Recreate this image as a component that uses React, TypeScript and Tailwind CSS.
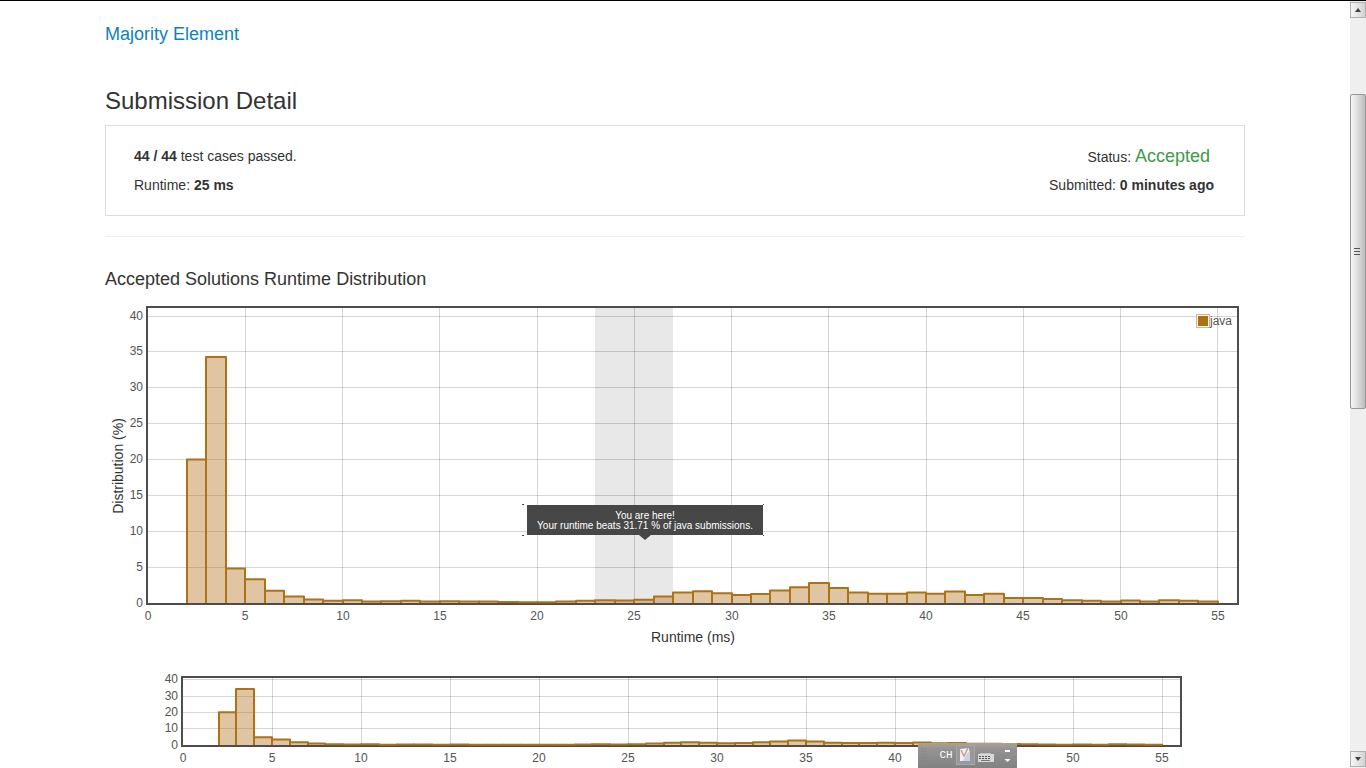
import React from "react";

type Frame = {
  width: number;
  height: number;
  left: number;
  top: number;
  right: number;
  bottom: number;
  unitX: number;
  unitY: number;
  stepY: number;
  labelY: number;
};

const FIRST_BIN = 2;

const SHARES: number[] = [
  20, 34.3, 4.8, 3.3, 1.7, 0.9, 0.5, 0.3, 0.4, 0.2, 0.25, 0.3, 0.2, 0.25, 0.2, 0.2, 0.15, 0.1, 0.1,
  0.2, 0.3, 0.4, 0.35, 0.45, 0.9, 1.45, 1.65, 1.35, 1.1, 1.25, 1.75, 2.2, 2.8, 2.1, 1.45, 1.3, 1.3,
  1.45, 1.3, 1.6, 1.1, 1.3, 0.7, 0.7, 0.55, 0.4, 0.3, 0.2, 0.35, 0.2, 0.4, 0.3, 0.2,
];

const MAIN: Frame = {
  width: 1140,
  height: 352,
  left: 43,
  top: 8,
  right: 1132,
  bottom: 303,
  unitX: 19.45,
  unitY: 7.175,
  stepY: 5,
  labelY: 320,
};

const OVERVIEW: Frame = {
  width: 1140,
  height: 116,
  left: 78,
  top: 26,
  right: 1075,
  bottom: 93,
  unitX: 17.8,
  unitY: 1.633,
  stepY: 10,
  labelY: 110,
};

function Plot({ frame, children }: { frame: Frame; children?: React.ReactNode }) {
  const { left, top, right, bottom, unitX, unitY, stepY, labelY } = frame;
  const xTicks = Array.from({ length: 12 }, (_, i) => i * 5);
  const yTicks = Array.from({ length: 40 / stepY + 1 }, (_, i) => i * stepY);
  const px = (v: number) => Math.round(left + v * unitX);
  const gridX = (v: number) => Math.floor(left + v * unitX) + 0.5;
  const py = (v: number) => Math.floor(bottom - v * unitY);

  return (
    <>
      <g stroke="#000000" strokeOpacity="0.16">
        {xTicks.slice(1).map((t) => (
          <line key={t} x1={gridX(t)} x2={gridX(t)} y1={top} y2={bottom} />
        ))}
        {yTicks.slice(1).map((t) => (
          <line key={t} x1={left} x2={right} y1={py(t) + 0.5} y2={py(t) + 0.5} />
        ))}
      </g>
      {children}
      <rect
        x={left - 1}
        y={top - 1}
        width={right - left + 2}
        height={bottom - top + 2}
        fill="none"
        stroke="#4d4d4f"
        strokeWidth="2"
      />
      <g fill="#b06f13" fillOpacity="0.4" stroke="#ae7216" strokeWidth="2" strokeLinejoin="round">
        {SHARES.map((share, i) => {
          const x0 = px(FIRST_BIN + i);
          const x1 = px(FIRST_BIN + i + 1);
          return <path key={i} d={`M${x0} ${bottom}V${bottom - share * unitY}H${x1}V${bottom}`} />;
        })}
      </g>
      <g fill="#545454" className="text-[12px]">
        {xTicks.map((t) => (
          <text key={t} x={px(t)} y={labelY} textAnchor="middle">
            {t}
          </text>
        ))}
        {yTicks.map((t) => (
          <text key={t} x={left - 5} y={py(t) + 4} textAnchor="end">
            {t}
          </text>
        ))}
      </g>
    </>
  );
}

function RuntimeChart() {
  return (
    <svg
      viewBox={`0 0 ${MAIN.width} ${MAIN.height}`}
      className="block w-full"
      role="img"
      aria-label="Accepted Solutions Runtime Distribution"
    >
      <Plot frame={MAIN}>
        <rect x="490" y="8" width="78" height="295" fill="#000000" fillOpacity="0.09" />
      </Plot>
      <g fill="#333333" className="text-[14px]">
        <text x="588" y="342" textAnchor="middle">
          Runtime (ms)
        </text>
        <text transform="translate(18 166) rotate(-90)" textAnchor="middle">
          Distribution (%)
        </text>
      </g>
      <rect x="1091.5" y="14.5" width="13" height="13" fill="#ffffff" stroke="#d9b48f" />
      <rect x="1093" y="16" width="10" height="10" fill="#b06f13" />
      <text x="1105" y="25" fill="#545454" className="text-[12px]">
        java
      </text>
      <g fill="#474747">
        <rect x="422" y="205" width="236" height="30" />
        <path d="M534 235h12l-6 5z" />
        <rect x="417" y="204" width="2" height="1" />
        <rect x="417" y="235" width="2" height="1" />
        <rect x="658" y="204" width="1" height="1" />
        <rect x="658" y="235" width="1" height="1" />
      </g>
      <g fill="#ffffff" textAnchor="middle" className="text-[10px]">
        <text x="540" y="219">
          You are here!
        </text>
        <text x="540" y="229">
          Your runtime beats 31.71 % of java submissions.
        </text>
      </g>
    </svg>
  );
}

function OverviewChart() {
  return (
    <svg
      viewBox={`0 0 ${OVERVIEW.width} ${OVERVIEW.height}`}
      className="block w-full"
      role="img"
      aria-label="Runtime overview"
    >
      <Plot frame={OVERVIEW} />
    </svg>
  );
}

function ScrollButton({ label, path }: { label: string; path: string }) {
  return (
    <button
      type="button"
      aria-label={label}
      className="flex h-4 w-full items-center justify-center border border-[#b0b0b0] bg-linear-to-r from-[#f6f6f6] to-[#d2d2d2]"
    >
      <svg width="6" height="4" viewBox="0 0 6 4">
        <path d={path} fill="#404040" />
      </svg>
    </button>
  );
}

function ScrollBar() {
  return (
    <aside className="flex w-4 shrink-0 flex-col bg-[#efefef] py-px">
      <ScrollButton label="Scroll up" path="M0 4L3 0L6 4z" />
      <div className="h-19" />
      <div className="flex h-[315px] items-center rounded-xs border border-[#979797] bg-linear-to-r from-[#f5f5f5] via-[#dcdcdc] to-[#bcbcbc] pl-[3px]">
        <svg width="6" height="8" viewBox="0 0 6 8">
          <path d="M0 0.500h6M0 3.500h6M0 6.500h6" stroke="#555555" />
        </svg>
      </div>
      <div className="flex-1" />
      <ScrollButton label="Scroll down" path="M0 0L3 4L6 0z" />
    </aside>
  );
}

function LanguageBar() {
  return (
    <div className="absolute right-[349px] bottom-0 flex h-[25px] w-[99px] items-center bg-linear-to-b from-[#aaa195] via-[#939393] via-25% to-[#828282]">
      <svg width="20" height="25" viewBox="0 0 20 25" className="shrink-0">
        <path d="M4 5v14M7 5v14" stroke="#74828a" strokeDasharray="1 2" />
      </svg>
      <button type="button" className="w-4 font-['Liberation_Mono',monospace] text-[11px] text-white">
        CH
      </button>
      <button type="button" aria-label="Input method" className="ml-0.5 shrink-0">
        <svg width="19" height="25" viewBox="0 0 19 25">
          <rect x="0.500" y="2.500" width="18" height="19" fill="#999999" stroke="#aaa5a2" />
          <path d="M4 6l9-1v13H4z" fill="#eef2f8" />
          <path d="M10 12l4-5v11h-7z" fill="#c1d7ee" />
          <path d="M5 7l3 6 4-8" fill="none" stroke="#d99a80" strokeWidth="1.500" />
        </svg>
      </button>
      <button type="button" aria-label="Keyboard" className="ml-0.5 shrink-0">
        <svg width="18" height="25" viewBox="0 0 18 25">
          <path d="M1 11h16v8H1z" fill="#d9d9d9" />
          <path d="M2 13.500h12M2 15.500h12" stroke="#555555" strokeDasharray="2 1" />
          <path d="M4 17.500h9" stroke="#777777" />
          <path d="M3 10.500h11" fill="none" stroke="#c4c4c4" />
        </svg>
      </button>
      <button type="button" aria-label="Language bar options" className="ml-2 shrink-0">
        <svg width="9" height="25" viewBox="0 0 9 25">
          <path d="M2 8h5" stroke="#ffffff" strokeWidth="2" />
          <path d="M1.500 16h6l-3 3z" fill="#ffffff" />
        </svg>
      </button>
    </div>
  );
}

export default function App() {
  return (
    <div className="relative flex min-h-screen overflow-hidden border-t border-black bg-white font-['Liberation_Sans',Arial,sans-serif] text-sm text-[#333333]">
      <main className="min-w-0 flex-1">
        <div className="mx-auto max-w-[1140px] pt-[23px]">
          <a href="#problem" className="block w-fit text-lg leading-5 text-[#0f82bd]">
            Majority Element
          </a>
          <h1 className="mt-[37px] text-2xl leading-10">Submission Detail</h1>
          <section className="mt-1 flex justify-between border border-[#dddddd] px-7 py-4">
            <div>
              <p className="h-[29px] leading-7">
                <b>44 / 44</b> test cases passed.
              </p>
              <p className="leading-7">
                Runtime: <b>25 ms</b>
              </p>
            </div>
            <div className="pr-0.5 text-right">
              <p className="h-[29px] pr-1 leading-7">
                Status: <span className="text-lg leading-7 text-[#3f9a48]">Accepted</span>
              </p>
              <p className="leading-7">
                Submitted: <b>0 minutes ago</b>
              </p>
            </div>
          </section>
          <hr className="mt-5 border-[#eeeeee]" />
          <h2 className="mt-8 mb-[11px] text-lg leading-5">Accepted Solutions Runtime Distribution</h2>
          <RuntimeChart />
          <OverviewChart />
        </div>
      </main>
      <ScrollBar />
      <LanguageBar />
    </div>
  );
}
